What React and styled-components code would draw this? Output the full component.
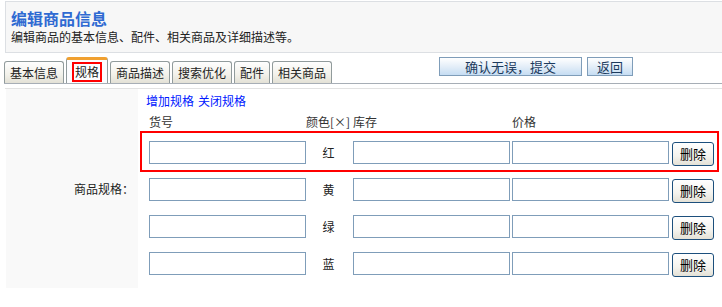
import React from 'react';
import styled, { createGlobalStyle } from 'styled-components';

const GlobalStyle = createGlobalStyle`
  body {
    margin: 0;
    background: #fff;
    font-family: "Noto Sans CJK SC", "DejaVu Sans", sans-serif;
    font-size: 12px;
    color: #333;
    overflow: hidden;
  }
`;

const Page = styled.div`
  width: 740px;
  padding: 1px 0 0 5px;
`;

const HeaderPanel = styled.div`
  border: 1px solid #dcdfe3;
  background: #f7f7f7;
  padding: 0 0 0 5px;
  box-sizing: border-box;
  height: 52px;
`;

const Title = styled.h1`
  margin: 0;
  padding-top: 5px;
  font-size: 16px;
  line-height: 22px;
  font-weight: bold;
  color: #2f6ad2;
`;

const Subtitle = styled.p`
  margin: 0;
  font-size: 12px;
  line-height: 16px;
  color: #222;
`;

const TabStrip = styled.div`
  display: flex;
  align-items: flex-start;
  margin: 3px 0 0 -1px;
  height: 27px;
  border-bottom: 1px solid #a7aeb6;
`;

const TabList = styled.div`
  display: flex;
  align-items: flex-end;
  height: 100%;
  gap: 2px;
`;

const Tab = styled.div`
  height: ${p => (p.active ? '26px' : '22px')};
  box-sizing: border-box;
  padding: 0 5px;
  display: flex;
  align-items: center;
  justify-content: center;
  border: 1px solid #919b9c;
  border-bottom: none;
  border-top: ${p => (p.active ? '3px solid #f0a030' : '1px solid #919b9c')};
  border-radius: 3px 3px 0 0;
  background: ${p => (p.active ? '#fcfcfe' : 'linear-gradient(#fefefe, #f2f1ea 60%, #e3e1d6)')};
  color: #222;
  font-size: 12px;
  line-height: 14px;
  white-space: nowrap;
`;

const Marked = styled.span`
  border: 2px solid #f00;
  padding: 1px 1px;
`;

const ActionGroup = styled.div`
  display: flex;
  gap: 5px;
  margin: 1px 0 0 107px;
`;

const ActionButton = styled.button`
  width: ${p => p.width}px;
  height: 19px;
  padding: 0;
  border: 1px solid #7f9db9;
  background: linear-gradient(#ffffff, #e4eef8 50%, #c6ddf3);
  color: #1c3b5e;
  font-family: inherit;
  font-size: 13px;
  line-height: 17px;
`;

const Content = styled.div`
  display: grid;
  grid-template-columns: 133px 1fr;
  margin: 4px 0 0 0;
  border-top: 1px solid #e2e2e2;
`;

const LabelCell = styled.div`
  background: #f9f9f9;
  display: flex;
  align-items: center;
  justify-content: flex-end;
  padding-right: 4px;
  margin-left: 1px;
  color: #222;
  font-size: 12px;
`;

const SpecCell = styled.div`
  padding: 0 0 13px 8px;
`;

const LinkRow = styled.div`
  margin-top: 3px;
  line-height: 18px;
  display: flex;
  gap: 4px;
`;

const SpecLink = styled.a`
  color: #0018ff;
  text-decoration: none;
  font-size: 12px;
`;

const SpecGrid = styled.div`
  display: grid;
  width: fit-content;
  grid-template-columns: 157px 47px 159px 160px 42px;
  margin-left: 3px;
`;

const HeadRow = styled(SpecGrid)`
  margin-top: 3px;
  line-height: 18px;
  color: #333;
`;

const HeadCell = styled.div`
  white-space: nowrap;
`;

const Rows = styled.div`
  display: flex;
  flex-direction: column;
  gap: 14px;
  margin-top: 10px;
`;

const Row = styled(SpecGrid)`
  position: relative;
  grid-template-rows: 23px;
  align-items: start;

  ${p => p.marked && `
    &::after {
      content: '';
      position: absolute;
      top: -10px;
      bottom: -8px;
      left: -9px;
      right: -5px;
      border: 2px solid #f00;
      pointer-events: none;
    }
  `}
`;

const TextInput = styled.input`
  width: 157px;
  height: 23px;
  box-sizing: border-box;
  border: 1px solid #7f9db9;
  background: #fff;
  padding: 0 3px;
  font-family: inherit;
  font-size: 12px;
`;

const ColorName = styled.div`
  line-height: 23px;
  text-align: center;
  color: #222;
  padding-right: 2px;
`;

const DeleteButton = styled.button`
  width: 42px;
  height: 24px;
  margin-top: 1px;
  padding: 0;
  border: 1px solid #1c4f7c;
  border-radius: 3px;
  background: linear-gradient(#ffffff, #f4f3ee 60%, #e4e1d6);
  color: #000;
  font-family: inherit;
  font-size: 13px;
  line-height: 20px;
`;

const tabs = ['基本信息', '规格', '商品描述', '搜索优化', '配件', '相关商品'];
const colors = ['红', '黄', '绿', '蓝'];

export default function App() {
  return (
    <Page>
      <GlobalStyle />
      <HeaderPanel>
        <Title>编辑商品信息</Title>
        <Subtitle>编辑商品的基本信息、配件、相关商品及详细描述等。</Subtitle>
      </HeaderPanel>

      <TabStrip>
        <TabList>
          {tabs.map(t => (
            <Tab key={t} active={t === '规格'}>
              {t === '规格' ? <Marked>{t}</Marked> : t}
            </Tab>
          ))}
        </TabList>
        <ActionGroup>
          <ActionButton width={143}>确认无误，提交</ActionButton>
          <ActionButton width={46}>返回</ActionButton>
        </ActionGroup>
      </TabStrip>

      <Content>
        <LabelCell>商品规格：</LabelCell>
        <SpecCell>
          <LinkRow>
            <SpecLink href="#">增加规格</SpecLink>
            <SpecLink href="#">关闭规格</SpecLink>
          </LinkRow>
          <HeadRow>
            <HeadCell>货号</HeadCell>
            <HeadCell>颜色[×]</HeadCell>
            <HeadCell>库存</HeadCell>
            <HeadCell>价格</HeadCell>
            <HeadCell />
          </HeadRow>
          <Rows>
            {colors.map((c, i) => (
              <Row key={c} marked={i === 0}>
                <TextInput />
                <ColorName>{c}</ColorName>
                <TextInput />
                <TextInput />
                <DeleteButton>删除</DeleteButton>
              </Row>
            ))}
          </Rows>
        </SpecCell>
      </Content>
    </Page>
  );
}
